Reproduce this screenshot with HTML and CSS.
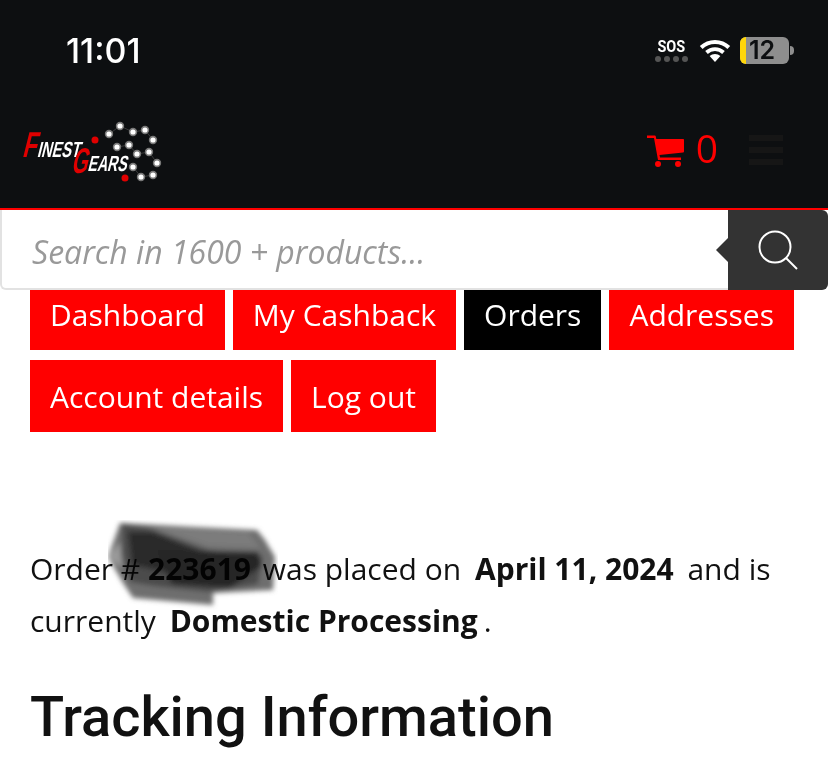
FILE: index.html
```html
<!DOCTYPE html>
<html lang="en">
  <head>
    <meta charset="UTF-8" />
    <meta name="viewport" content="width=device-width, initial-scale=1.0" />
    <title>Order details</title>
    <link rel="stylesheet" href="styles.css">
  </head>
  <body>
    <header class="header">
      <div class="status">
        <span class="time">11:01</span>
        <div class="status-icons">
          <div class="sos">
            <span class="sos-text">SOS</span>
            <span class="sos-dots"><i></i><i></i><i></i><i></i></span>
          </div>
          <svg class="wifi" viewBox="0 0 32 24" width="32" height="24">
            <path d="M16 24l-5.400-6a8 8 0 0 1 10.800 0z" fill="#fff"/>
            <path d="M7.500 14.500a12.500 12.500 0 0 1 17 0" fill="none" stroke="#fff" stroke-width="3.800"/>
            <path d="M2.200 9.500a20 20 0 0 1 27.600 0" fill="none" stroke="#fff" stroke-width="4"/>
          </svg>
          <div class="battery">
            <span class="battery-fill"></span>
            <span class="battery-num">12</span>
          </div>
          <span class="battery-nub"></span>
        </div>
      </div>
      <div class="topbar">
        <svg class="logo" viewBox="0 0 145 65" width="145" height="65">
          <path class="logo-lines" d="M89 14L100 6L113 12L125 10L133 20M97 27L109 25L117 34L129 32L137 43M113 47L121 57L133 55"/>
          <g class="logo-dots">
            <circle cx="100" cy="6" r="3.400"/><circle cx="89" cy="14" r="3.400"/><circle cx="113" cy="12" r="3.400"/>
            <circle cx="125" cy="10" r="3.400"/><circle cx="133" cy="20" r="3.400"/><circle cx="97" cy="27" r="3.400"/>
            <circle cx="109" cy="25" r="3.400"/><circle cx="117" cy="34" r="3.400"/><circle cx="129" cy="32" r="3.400"/>
            <circle cx="137" cy="43" r="3.400"/><circle cx="113" cy="47" r="3.400"/><circle cx="121" cy="57" r="3.400"/>
            <circle cx="133" cy="55" r="3.400"/>
          </g>
          <circle cx="75" cy="20" r="3.500" fill="#e00000"/>
          <circle cx="105" cy="58" r="3.500" fill="#e00000"/>
          <g class="logo-text" transform="skewX(-14)">
            <text x="11" y="37" class="logo-red logo-big" textLength="14" lengthAdjust="spacingAndGlyphs">F</text>
            <text x="26" y="37" class="logo-white" textLength="43" lengthAdjust="spacingAndGlyphs">INEST</text>
            <text x="64" y="53" class="logo-red logo-big" textLength="16" lengthAdjust="spacingAndGlyphs">G</text>
            <text x="80" y="51" class="logo-white" textLength="39" lengthAdjust="spacingAndGlyphs">EARS</text>
          </g>
        </svg>
        <div class="top-actions">
          <svg class="cart" viewBox="0 0 38 34" width="38" height="34">
            <path d="M1 1.500h7.500c.7 0 1.200.4 1.300 1L10.300 5H37c.6 0 1 .4 1 1v11.500c0 .5-.4.9-.9 1L13.500 21l.6 2.500H35V26H12L8 4H1z" fill="#f00"/>
            <circle cx="12" cy="30" r="3" fill="#f00"/>
            <circle cx="32" cy="30" r="3" fill="#f00"/>
          </svg>
          <span class="cart-count">0</span>
          <div class="burger"><span></span><span></span><span></span></div>
        </div>
      </div>
    </header>

    <form class="search">
      <input class="search-input" type="text" placeholder="Search in 1600 + products..." />
      <button class="search-btn" type="button">
        <svg viewBox="0 0 42 42" width="42" height="42">
          <circle cx="18" cy="18" r="15.500" fill="none" stroke="#fff" stroke-width="2"/>
          <path d="M29 29L40 40" stroke="#fff" stroke-width="2"/>
        </svg>
      </button>
    </form>

    <nav class="tabs">
      <a class="tab">Dashboard</a>
      <a class="tab">My Cashback</a>
      <a class="tab active">Orders</a>
      <a class="tab">Addresses</a>
      <a class="tab">Account details</a>
      <a class="tab">Log out</a>
    </nav>

    <main class="content">
      <p class="summary">
        Order # <b class="order-no">223619</b> was placed on <b class="hl">April 11, 2024</b> and is
        currently <b class="hl">Domestic Processing</b>.
      </p>
      <h2 class="title">Tracking Information</h2>

      <svg class="scribble" viewBox="0 0 170 90" width="170" height="90">
        <defs>
          <filter id="soft"><feGaussianBlur stdDeviation="2.500"/></filter>
        </defs>
        <g filter="url(#soft)">
          <path d="M12 3L89 7L149 10L157 20L167 37L165 70L105 73L105 85L25 78L15 63L0 37z" fill="#6e6e6e"/>
          <path d="M14 4L40 8L100 30L155 36L150 64L100 72L45 66L22 62L14 34z" fill="#4c4c4c"/>
          <path d="M20 12L45 12L100 34L70 55L24 45z" fill="#2c2c2c"/>
          <path d="M48 30L150 32L154 46L122 68L64 64z" fill="#262626"/>
          <path d="M45 8L85 8L140 12L152 28L100 26z" fill="#7c7c7c"/>
          <path d="M0 37L12 22L14 48z" fill="#9a9a9a"/>
        </g>
      </svg>
    </main>
  </body>
</html>
```

FILE: styles.css
```css
* {
  box-sizing: border-box;
}
body {
  margin: 0;
  height: 100vh;
  overflow: hidden;
  background-color: white;
  color: #111;
  font-family: "Open Sans", sans-serif;
}
.header {
  height: 210px;
  background-color: #0d0f11;
  border-bottom: 2px solid #f00;
}
.status {
  height: 100px;
  padding: 0 34px 0 66px;
  display: flex;
  align-items: center;
  justify-content: space-between;
}
.time {
  font-family: Inter, sans-serif;
  font-size: 34px;
  font-weight: 500;
  color: white;
}
.status-icons {
  display: flex;
  align-items: center;
}
.sos {
  width: 33px;
  margin-right: 11px;
  display: flex;
  flex-direction: column;
  align-items: center;
}
.sos-text {
  font-family: Roboto, sans-serif;
  font-size: 17px;
  line-height: 16px;
  font-weight: 700;
  color: white;
  transform: scaleX(0.85);
}
.sos-dots {
  display: flex;
  gap: 3px;
  margin-top: 2px;
}
.sos-dots i {
  width: 6px;
  height: 6px;
  border-radius: 50%;
  background-color: #555;
}
.wifi {
  margin-right: 9px;
}
.battery {
  width: 49px;
  height: 27px;
  border-radius: 6px;
  overflow: hidden;
  background-color: #8e8e8e;
  display: flex;
  align-items: center;
}
.battery-fill {
  width: 6px;
  height: 100%;
  background-color: #ffd60a;
}
.battery-num {
  margin-left: 3px;
  font-family: Inter, sans-serif;
  font-size: 25px;
  font-weight: 600;
  color: #0d0f11;
}
.battery-nub {
  width: 4px;
  height: 9px;
  margin-left: 1px;
  border-radius: 0 4px 4px 0;
  background-color: #8e8e8e;
}
.topbar {
  height: 98px;
  padding-left: 20px;
  display: flex;
  justify-content: space-between;
}
.logo {
  margin-top: 20px;
}
.logo-text text {
  font-family: "Liberation Sans", sans-serif;
  font-weight: 700;
  font-size: 22px;
}
.logo-text .logo-big {
  font-size: 36px;
}
.logo-red {
  fill: #e00000;
}
.logo-white {
  fill: white;
}
.logo-lines {
  fill: none;
  stroke: #444;
  stroke-width: 0.8;
}
.logo-dots circle {
  fill: white;
  stroke: #777;
  stroke-width: 1.6;
}
.top-actions {
  padding: 25px 45px 0 0;
  display: flex;
  align-items: flex-start;
}
.cart {
  margin-top: 9px;
}
.cart-count {
  margin-left: 12px;
  font-size: 39px;
  line-height: 46px;
  color: #f00;
}
.burger {
  width: 34px;
  margin: 10px 0 0 31px;
  display: flex;
  flex-direction: column;
  gap: 6px;
}
.burger span {
  height: 6px;
  background-color: #161616;
}
.search {
  position: relative;
  z-index: 2;
  height: 80px;
  display: flex;
}
.search-input {
  flex: 1;
  min-width: 0;
  padding: 4px 30px 0;
  border: 2px solid #e2e2e2;
  border-top: 0;
  border-right: 0;
  border-radius: 0 0 0 6px;
  outline: none;
  font-family: "Open Sans", sans-serif;
  font-size: 32px;
  font-style: italic;
}
.search-input::placeholder {
  color: #999;
}
.search-btn {
  position: relative;
  width: 100px;
  padding: 0;
  border: 0;
  border-radius: 0 6px 6px 0;
  background-color: #333;
}
.search-btn::before {
  content: "";
  position: absolute;
  left: -12px;
  top: 28px;
  border-style: solid;
  border-width: 12px 12px 12px 0;
  border-color: transparent #333 transparent transparent;
}
.search-btn svg {
  display: block;
  margin: auto;
}
.tabs {
  margin-top: -12px;
  padding: 0 30px;
  display: flex;
  flex-wrap: wrap;
  gap: 10px 8px;
}
.tab {
  height: 72px;
  padding: 0 20px;
  display: flex;
  align-items: center;
  background-color: #f00;
  color: white;
  font-size: 30px;
}
.tab.active {
  background-color: black;
}
.content {
  position: relative;
  padding: 111px 30px 0;
}
.summary {
  margin: 0;
  font-size: 30px;
  line-height: 52px;
}
.order-no {
  margin-right: 4px;
}
.summary .hl {
  margin: 0 6px;
}
.title {
  margin: 39px 0 0;
  font-family: Roboto, sans-serif;
  font-size: 56px;
  line-height: 62px;
  font-weight: 500;
}
.scribble {
  position: absolute;
  left: 108px;
  top: 88px;
  mix-blend-mode: multiply;
}
```
